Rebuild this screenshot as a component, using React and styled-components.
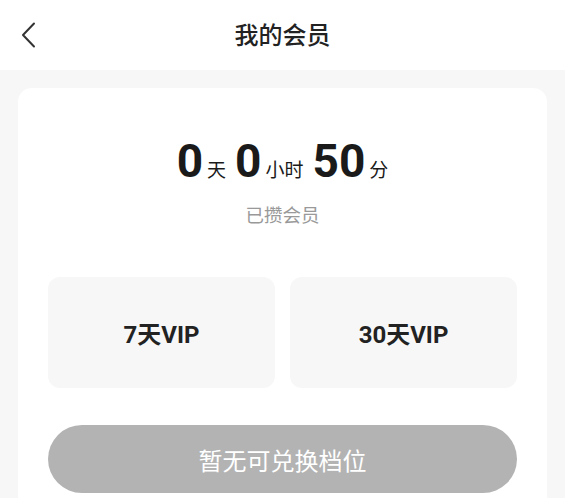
import React from "react";
import styled, { createGlobalStyle } from "styled-components";

const GlobalStyle = createGlobalStyle`
  body {
    margin: 0;
    background-color: #f7f7f7;
    font-family: Roboto, "Noto Sans CJK SC", sans-serif;
  }
`;

const Page = styled.div`
  width: 565px;
  height: 498px;
  overflow: hidden;
  background-color: #f7f7f7;
`;

const Header = styled.div`
  height: 70px;
  background-color: #fff;
  display: flex;
  align-items: center;
  justify-content: center;
  position: relative;
`;

const BackButton = styled.div`
  position: absolute;
  left: 15px;
  top: 20px;
  width: 26px;
  height: 30px;
  display: flex;
  align-items: center;
  justify-content: center;
  cursor: pointer;
`;

const Title = styled.h1`
  margin: 0 0 3px;
  font-size: 24px;
  line-height: 1;
  font-weight: 500;
  color: #222;
  font-family: "Noto Sans CJK SC", sans-serif;
`;

const Card = styled.div`
  margin: 18px 18px 0;
  background-color: #fff;
  border-radius: 14px;
  padding: 50px 30px 40px;
`;

const TimeRow = styled.div`
  display: flex;
  align-items: baseline;
  justify-content: center;
  color: #1a1a1a;
`;

const Number = styled.span`
  font-size: 46px;
  font-weight: 700;
  line-height: 1;
  margin-right: 4px;
`;

const Unit = styled.span`
  font-size: 19px;
  font-family: "Noto Sans CJK SC", sans-serif;
  margin-right: 9px;
  &:last-child {
    margin-right: 0;
  }
`;

const Caption = styled.div`
  margin-top: 18px;
  text-align: center;
  font-size: 18.5px;
  line-height: 24px;
  color: #999;
  font-family: "Noto Sans CJK SC", sans-serif;
`;

const Options = styled.div`
  margin-top: 51px;
  display: grid;
  grid-template-columns: 1fr 1fr;
  gap: 15px;
`;

const Option = styled.div`
  height: 111px;
  border-radius: 12px;
  background-color: #f7f7f7;
  display: flex;
  align-items: center;
  justify-content: center;
  font-size: 24px;
  font-weight: 700;
  color: #222;
`;

const RedeemButton = styled.button`
  margin-top: 37px;
  width: 100%;
  height: 68px;
  border: none;
  border-radius: 34px;
  background-color: #b3b3b3;
  color: #fff;
  font-size: 24px;
  font-family: "Noto Sans CJK SC", sans-serif;
  cursor: not-allowed;
`;

const BackIcon = () => (
  <svg width="16" height="26" viewBox="0 0 16 26" fill="none">
    <path
      d="M14 1.5 L3 13 L14 24.5"
      stroke="#333"
      strokeWidth="2"
      strokeLinecap="round"
      strokeLinejoin="round"
    />
  </svg>
);

const plans = ["7天VIP", "30天VIP"];

const App = () => {
  return (
    <Page>
      <GlobalStyle />
      <Header>
        <BackButton>
          <BackIcon />
        </BackButton>
        <Title>我的会员</Title>
      </Header>
      <Card>
        <TimeRow>
          <Number>0</Number>
          <Unit>天</Unit>
          <Number>0</Number>
          <Unit>小时</Unit>
          <Number>50</Number>
          <Unit>分</Unit>
        </TimeRow>
        <Caption>已攒会员</Caption>
        <Options>
          {plans.map((plan) => (
            <Option key={plan}>{plan}</Option>
          ))}
        </Options>
        <RedeemButton disabled>暂无可兑换档位</RedeemButton>
      </Card>
    </Page>
  );
};

export default App;
